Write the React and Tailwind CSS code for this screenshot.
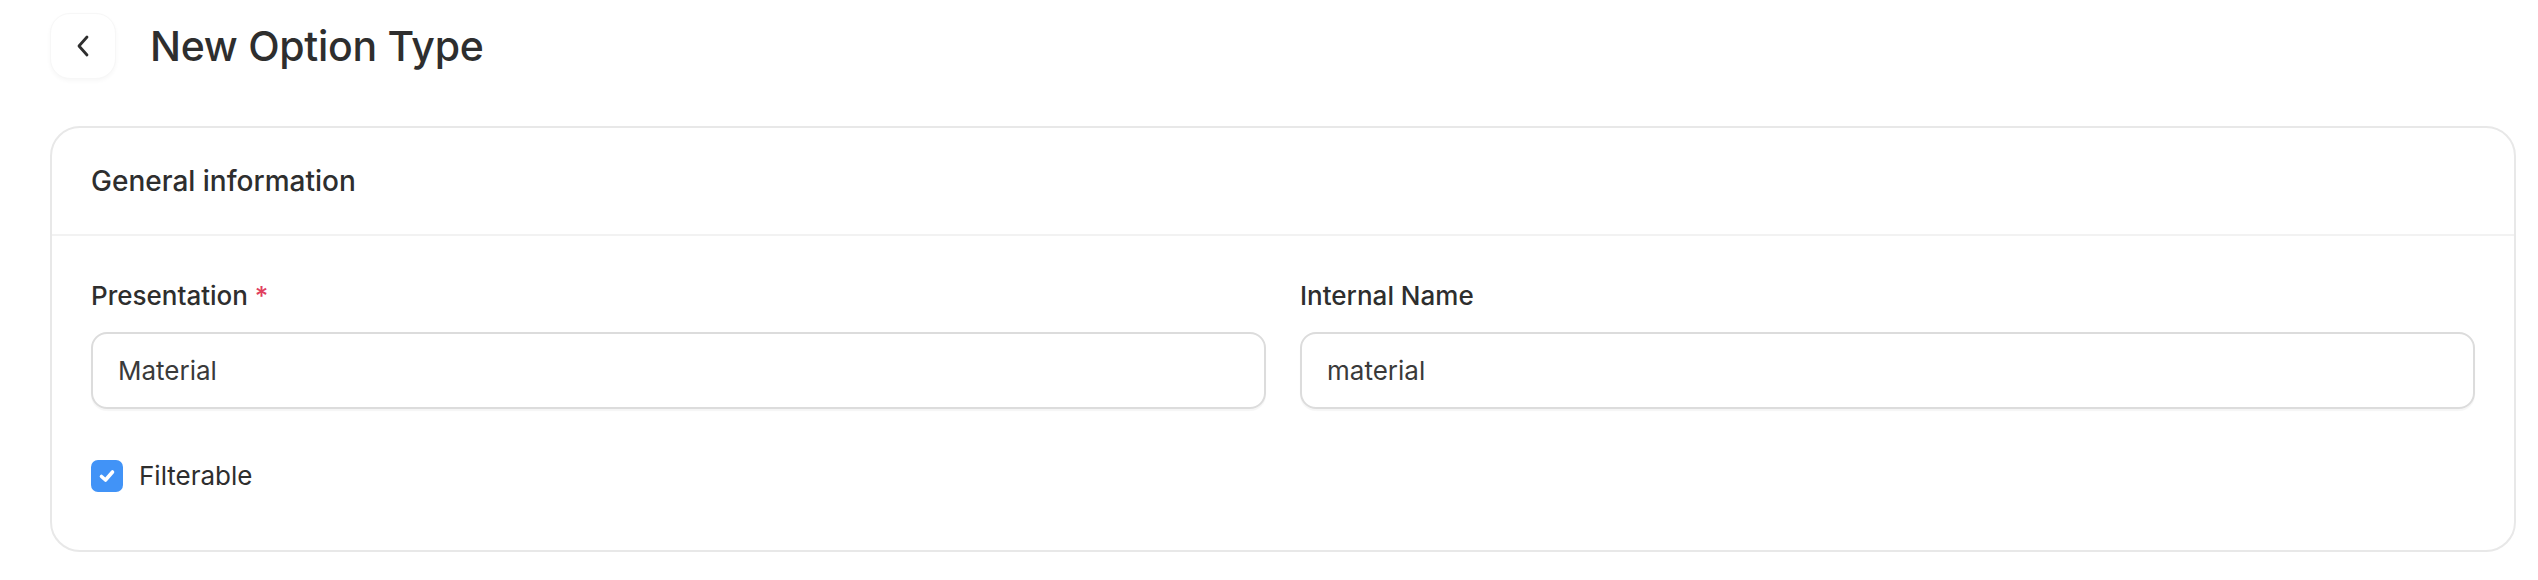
import React from "react";

export default function App() {
  return (
    <div
      className="w-[2538px] h-[580px] bg-white text-[#2e2e2e] overflow-hidden"
      style={{ fontFamily: "Inter, 'Noto Sans', sans-serif" }}
    >
      <div className="flex items-center h-[90px] pl-[50px] pt-[2px]">
        <button className="w-[66px] h-[66px] rounded-[20px] bg-white shadow-[0_2px_4px_rgba(0,0,0,0.035)] border border-[#f7f7f7] flex items-center justify-center">
          <svg width="16" height="24" viewBox="0 0 16 24" fill="none">
            <path d="M12 3 L4 12 L12 21" stroke="#2e2e2e" strokeWidth="2.8" strokeLinecap="round" strokeLinejoin="round" />
          </svg>
        </button>
        <h1 className="ml-[34px] text-[41px] font-medium tracking-[-0.3px] leading-none text-[#2e2e2e]">
          New Option Type
        </h1>
      </div>
      <div className="ml-[50px] mr-[22px] mt-[36px] h-[426px] rounded-[30px] border-2 border-[#e8e8e8] bg-white">
        <div className="h-[108px] border-b-2 border-[#f2f2f2] flex items-center px-[39px]">
          <span className="text-[28px] font-medium">General information</span>
        </div>
        <div className="px-[39px] pt-[42px]">
          <div className="grid grid-cols-2 gap-[34px]">
            <div>
              <div className="text-[26px] font-medium leading-[36px] mb-[18px]">
                Presentation <span className="text-[#e0405e]">*</span>
              </div>
              <div className="h-[77px] rounded-[16px] border-2 border-[#dcdcdc] shadow-[0_2px_1px_rgba(0,0,0,0.04)] flex items-center px-[25px] text-[26px] text-[#3a3a3a]">
                Material
              </div>
            </div>
            <div>
              <div className="text-[26px] font-medium leading-[36px] mb-[18px]">
                Internal Name
              </div>
              <div className="h-[77px] rounded-[16px] border-2 border-[#dcdcdc] shadow-[0_2px_1px_rgba(0,0,0,0.04)] flex items-center px-[25px] text-[26px] text-[#3a3a3a]">
                material
              </div>
            </div>
          </div>
          <div className="flex items-center mt-[49px]">
            <div className="w-[32px] h-[32px] rounded-[7px] bg-[#4193f7] flex items-center justify-center">
              <svg width="22" height="22" viewBox="0 0 22 22" fill="none">
                <path d="M5.5 11.5 L9.5 15 L16.5 7" stroke="white" strokeWidth="3.6" strokeLinecap="round" strokeLinejoin="round" />
              </svg>
            </div>
            <span className="ml-[16px] text-[26px] leading-[36px] text-[#2e2e2e]">Filterable</span>
          </div>
        </div>
      </div>
    </div>
  );
}
